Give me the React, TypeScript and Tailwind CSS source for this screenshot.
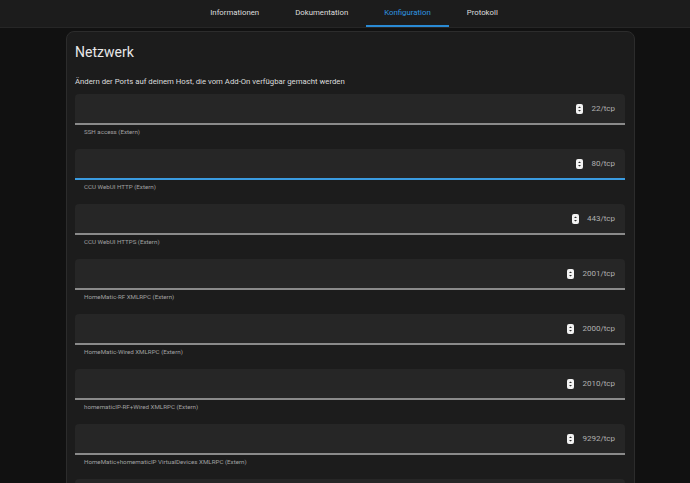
const tabs = ["Informationen", "Dokumentation", "Konfiguration", "Protokoll"];

const ports = [
  { value: "22/tcp", label: "SSH access (Extern)", focused: false },
  { value: "80/tcp", label: "CCU WebUI HTTP (Extern)", focused: true },
  { value: "443/tcp", label: "CCU WebUI HTTPS (Extern)", focused: false },
  { value: "2001/tcp", label: "HomeMatic-RF XMLRPC (Extern)", focused: false },
  { value: "2000/tcp", label: "HomeMatic-Wired XMLRPC (Extern)", focused: false },
  { value: "2010/tcp", label: "homematicIP-RF+Wired XMLRPC (Extern)", focused: false },
  { value: "9292/tcp", label: "HomeMatic+homematicIP VirtualDevices XMLRPC (Extern)", focused: false },
];

const Spinner = () => (
  <svg width="7" height="10" viewBox="0 0 7 10">
    <rect x="0" y="0" width="7" height="10" rx="2" fill="#f2f2f2" />
    <path d="M2 4 L3.5 2.4 L5 4 Z" fill="#2a2a2a" />
    <path d="M2 6 L3.5 7.6 L5 6 Z" fill="#2a2a2a" />
  </svg>
);

const App = () => {
  return (
    <div
      className="w-[690px] h-[483px] overflow-hidden bg-[#111111] text-[#e1e1e1]"
      style={{ fontFamily: "Roboto, 'Noto Sans', sans-serif" }}
    >
      {/* Tabs */}
      <div className="h-[28px] bg-[#1c1c1c] border-b border-[#262626] flex justify-center pl-[18px]">
        {tabs.map((t) => {
          const active = t === "Konfiguration";
          return (
            <div
              key={t}
              className={`px-[18px] h-full flex items-center text-[7.8px] border-b-2 ${
                active ? "text-[#2f96e0] border-[#2a8ad3]" : "text-[#dedede] border-transparent"
              }`}
            >
              {t}
            </div>
          );
        })}
      </div>

      {/* Card */}
      <div className="ml-[66px] mr-[55px] mt-[3px] bg-[#1c1c1c] border border-[#2c2c2c] rounded-[8px] pl-[8px] pr-[9px] pt-[10px]">
        <h1 className="text-[14px] leading-[20px] text-[#e8e8e8]">Netzwerk</h1>
        <p className="mt-[15px] text-[7.75px] leading-[10px] text-[#dcdcdc]">
          Ändern der Ports auf deinem Host, die vom Add-On verfügbar gemacht werden
        </p>
        <div className="mt-[7px] flex flex-col">
          {ports.map((p) => (
            <div key={p.label} className="h-[55px]">
              <div
                className={`h-[31px] bg-[#262626] rounded-t-[4px] border-b-2 flex items-center justify-end gap-[8px] pr-[10px] ${
                  p.focused ? "border-[#3a9be0]" : "border-[#8a8a8a]"
                }`}
              >
                <Spinner />
                <span className="text-[8px] text-[#b0b0b0]">{p.value}</span>
              </div>
              <div className="pl-[9px] pt-[3px] text-[6.2px] leading-[8px] text-[#a0a0a0]">{p.label}</div>
            </div>
          ))}
          <div className="h-[31px] bg-[#262626] rounded-t-[4px]" />
        </div>
      </div>
    </div>
  );
};

export default App;
